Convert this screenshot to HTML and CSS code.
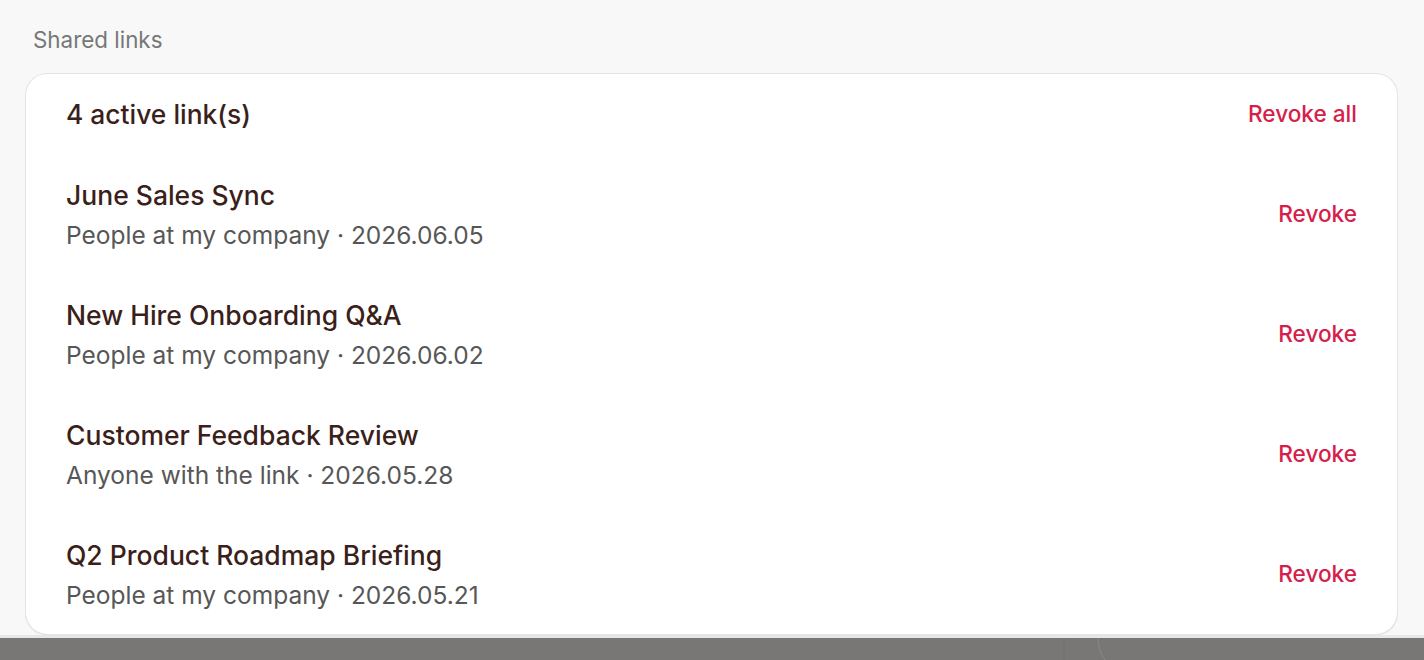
FILE: index.html
```html
<!DOCTYPE html>
<html lang="en">
<head>
<meta charset="utf-8">
<title>Shared links</title>
<link rel="stylesheet" href="styles.css">
</head>
<body>
<div class="page">
  <main class="content">
    <div class="section-label">Shared links</div>
    <section class="card">
      <header class="card-head">
        <h2 class="count">4 active link(s)</h2>
        <button class="revoke revoke-all" type="button">Revoke all</button>
      </header>
      <ul class="links">
        <li class="link-row">
          <div class="link-info">
            <div class="link-title">June Sales Sync</div>
            <div class="link-meta">People at my company · 2026.06.05</div>
          </div>
          <button class="revoke" type="button">Revoke</button>
        </li>
        <li class="link-row">
          <div class="link-info">
            <div class="link-title">New Hire Onboarding Q&amp;A</div>
            <div class="link-meta">People at my company · 2026.06.02</div>
          </div>
          <button class="revoke" type="button">Revoke</button>
        </li>
        <li class="link-row">
          <div class="link-info">
            <div class="link-title">Customer Feedback Review</div>
            <div class="link-meta">Anyone with the link · 2026.05.28</div>
          </div>
          <button class="revoke" type="button">Revoke</button>
        </li>
        <li class="link-row">
          <div class="link-info">
            <div class="link-title">Q2 Product Roadmap Briefing</div>
            <div class="link-meta">People at my company · 2026.05.21</div>
          </div>
          <button class="revoke" type="button">Revoke</button>
        </li>
      </ul>
    </section>
  </main>
  <div class="bottom-bar">
    <svg class="bar-art" width="1424" height="22" viewBox="0 0 1424 22" aria-hidden="true">
      <path d="M1064 0 L1064 22" stroke="#6e6d6c" stroke-width="1" fill="none"/>
      <path d="M1098 0 C1098 8 1100 15 1105 22" stroke="#8a8988" stroke-width="1" fill="none"/>
    </svg>
  </div>
</div>
</body>
</html>
```

FILE: styles.css
```css
* {
  box-sizing: border-box;
}

html, body {
  margin: 0;
  padding: 0;
}

body {
  background: #f8f8f8;
  font-family: Inter, "Noto Sans", "Liberation Sans", sans-serif;
  color: #3a1f1a;
}

.page {
  height: 660px;
  display: flex;
  flex-direction: column;
  overflow: hidden;
}

.content {
  flex: 1;
  padding: 26px 26px 0 25px;
  background: #f8f8f8;
  border-bottom: 3px solid #e7e7e5;
}

.section-label {
  padding-left: 8px;
  font-size: 22.4px;
  line-height: 28px;
  color: #777777;
  margin-bottom: 19px;
}

.card {
  background: #ffffff;
  border: 1.5px solid #e4e4e4;
  border-bottom: none;
  border-radius: 22px;
  padding: 0 40px 0 40px;
  box-shadow: 0 1.5px 0 #e4e4e4;
}

.card-head {
  height: 80px;
  display: flex;
  align-items: center;
  justify-content: space-between;
}

.count {
  margin: 0;
  font-size: 26.4px;
  line-height: 32px;
  font-weight: 500;
  color: #3a1f1a;
}

.revoke {
  background: none;
  border: none;
  padding: 0;
  font-family: inherit;
  font-size: 22.6px;
  line-height: 30px;
  font-weight: 500;
  color: #d6204a;
  cursor: pointer;
}

.links {
  list-style: none;
  margin: 0;
  padding: 0;
}

.link-row {
  height: 120px;
  display: flex;
  align-items: center;
  justify-content: space-between;
}

.link-info {
  display: flex;
  flex-direction: column;
  gap: 9px;
}

.link-title {
  font-size: 26.5px;
  line-height: 32px;
  font-weight: 500;
  color: #3a1f1a;
}

.link-meta {
  font-size: 24.5px;
  line-height: 30px;
  color: #575757;
}

.bottom-bar {
  height: 22px;
  flex: none;
  background: #787776;
  overflow: hidden;
}

.bar-art {
  display: block;
}
```
